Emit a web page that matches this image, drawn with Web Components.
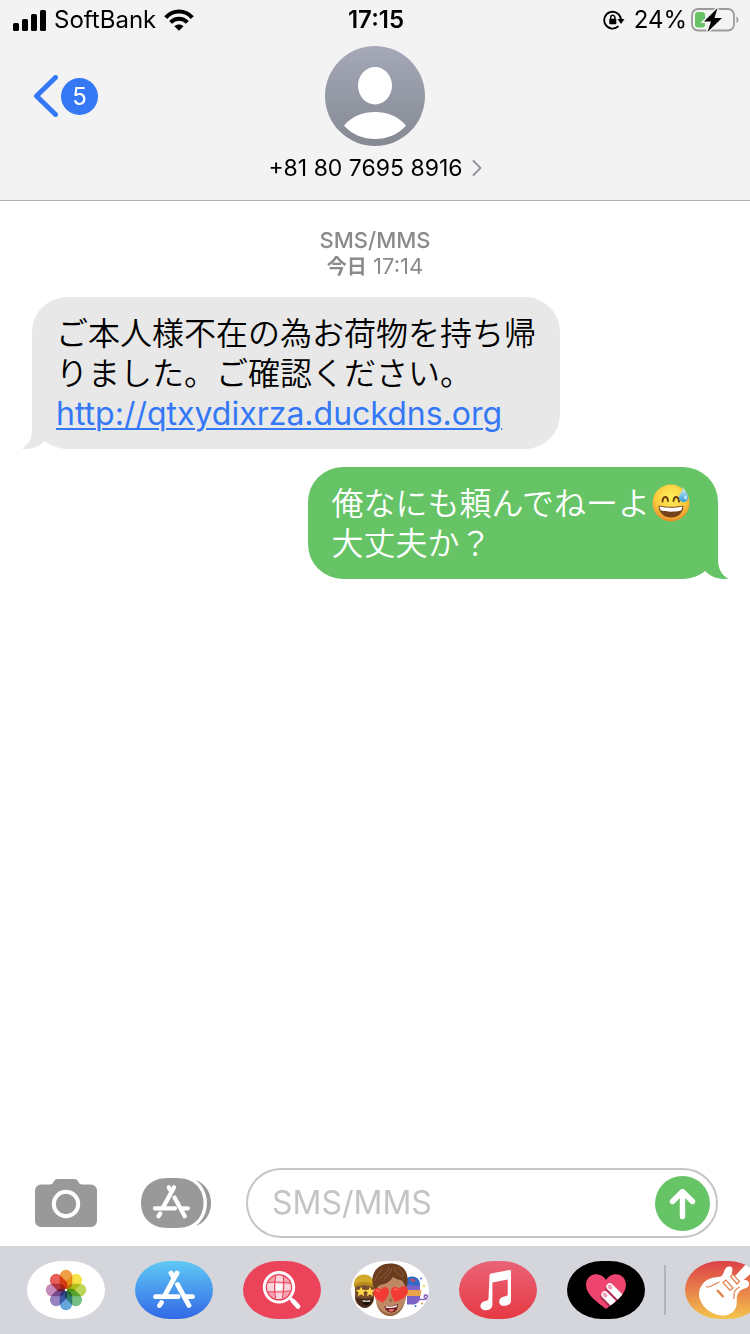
<!DOCTYPE html>
<html lang="ja">
<head>
<meta charset="utf-8">
<meta name="viewport" content="width=device-width, initial-scale=1">
<title>+81 80 7695 8916</title>
<style>
  body {
    margin: 0;
    background: #fff;
    color: #000;
    font-family: Inter, "Noto Sans CJK JP", sans-serif;
  }
</style>
</head>
<body>
<chat-screen>
  <status-bar slot="top" carrier="SoftBank" time="17:15" battery="24%"></status-bar>
  <chat-header slot="top" unread="5">+81 80 7695 8916</chat-header>

  <thread-date service="SMS/MMS" day="今日">17:14</thread-date>
  <message-bubble from="them">ご本人様不在の為お荷物を持ち帰りました。ご確認ください。<br><a href="http://qtxydixrza.duckdns.org">http://qtxydixrza.duckdns.org</a></message-bubble>
  <message-bubble from="me">俺なにも頼んでねーよ<sweat-smile></sweat-smile><br>大丈夫か？</message-bubble>

  <compose-bar slot="bottom" placeholder="SMS/MMS"></compose-bar>
  <app-drawer slot="bottom">
    <app-pill name="photos" label="写真"></app-pill>
    <app-pill name="store" label="App Store"></app-pill>
    <app-pill name="images" label="#画像"></app-pill>
    <app-pill name="memoji" label="ミー文字"></app-pill>
    <app-pill name="music" label="ミュージック"></app-pill>
    <app-pill name="touch" label="Digital Touch"></app-pill>
    <app-pill slot="more" name="guitar" label="GarageBand"></app-pill>
  </app-drawer>
</chat-screen>

<script>
const storeMark = /*html*/`
  <g fill="none" stroke="#fff" stroke-width="4.800" stroke-linecap="round">
    <path d="M36 12l3 5M42 12L30 34M42.500 23.500L54 44.500M20.500 35.700H43M51 35.700h6.500M26.500 41.500l-2 3"/>
  </g>`

class ChatScreen extends HTMLElement {
    constructor() {
        super();
        this.attachShadow({ mode: "open" }).innerHTML = /*html*/`
<style>
  :host {
    display: flex;
    flex-direction: column;
    min-height: 100vh;
    overflow: hidden;
  }
  main {
    flex: 1;
    display: flex;
    flex-direction: column;
    gap: 18px;
    padding: 26px 32px 18px;
  }
</style>
<slot name="top"></slot>
<main><slot></slot></main>
<slot name="bottom"></slot>`
    }
}

class StatusBar extends HTMLElement {
    connectedCallback() {
        if(this.shadowRoot) return
        this.attachShadow({ mode: "open" }).innerHTML = /*html*/`
<style>
  :host {
    display: grid;
    grid-template-columns: 1fr auto 1fr;
    align-items: center;
    height: 40px;
    padding: 0 11px 0 13px;
    background: #f3f3f3;
    font-size: 24px;
    line-height: 28px;
  }
  div { display: flex; align-items: center; gap: 8px; }
  .right { justify-content: flex-end; gap: 4px; }
  .lock { margin-right: 5px; }
  time { font-weight: 600; }
  svg { display: block; }
</style>
<div>
  <svg width="33" height="21" viewBox="0 0 33 21">
    <rect y="13" width="6" height="8" rx="1.500"/><rect x="9" y="9" width="6" height="12" rx="1.500"/>
    <rect x="18" y="4" width="6" height="17" rx="1.500"/><rect x="27" width="6" height="21" rx="1.500"/>
  </svg>
  <span>${this.getAttribute("carrier")}</span>
  <svg width="30" height="22" viewBox="0 0 30 22">
    <g fill="none" stroke="#000" stroke-width="4">
      <path d="M1.700 8.600C9 .4 21 .4 28.300 8.600"/>
      <path d="M6.600 13.400c4.700-5 12.100-5 16.800 0"/>
    </g>
    <path d="M15 21.800l-4.600-4.600c2.600-2.400 6.600-2.400 9.200 0z"/>
  </svg>
</div>
<time>${this.getAttribute("time")}</time>
<div class="right">
  <svg class="lock" width="22" height="20" viewBox="0 0 22 20">
    <path d="M15.500 16.200A8.400 8.400 0 1 1 18 9.500" fill="none" stroke="#000" stroke-width="1.800"/>
    <path d="M14.500 9h7l-3.500 5z"/>
    <rect x="6.300" y="8.800" width="7" height="5.400" rx=".8"/>
    <path d="M7.700 9V7.400a2.100 2.100 0 0 1 4.200 0V9" fill="none" stroke="#000" stroke-width="1.400"/>
  </svg>
  <span>${this.getAttribute("battery")}</span>
  <svg width="48" height="26" viewBox="0 0 48 26">
    <rect x="1" y="2" width="42" height="21.500" rx="6" fill="none" stroke="#9b9b9b" stroke-width="1.800"/>
    <path d="M45.500 9.500c2.600 1 2.600 5.600 0 6.600z" fill="#9b9b9b"/>
    <rect x="4" y="5" width="10" height="15.500" rx="3" fill="#66c466"/>
    <path d="M26.500 1L13 14.500h7L16.500 25 31 11h-7.500z" stroke="#f3f3f3" stroke-width="3"/>
    <path d="M26.500 1L13 14.500h7L16.500 25 31 11h-7.500z"/>
  </svg>
</div>`
    }
}

class ChatHeader extends HTMLElement {
    connectedCallback() {
        if(this.shadowRoot) return
        this.attachShadow({ mode: "open" }).innerHTML = /*html*/`
<style>
  :host {
    display: grid;
    grid-template-columns: 1fr auto 1fr;
    align-items: start;
    height: 160px;
    padding: 0 33px;
    background: #f3f3f3;
    border-bottom: 1px solid #b2b2b2;
  }
  button {
    padding: 0;
    border: 0;
    background: none;
    color: inherit;
    font: inherit;
  }
  .back { display: flex; align-items: center; gap: 3px; height: 112px; justify-self: start; }
  .badge {
    width: 37px;
    border-radius: 50%;
    background: #3478f6;
    color: #fff;
    font-size: 24px;
    line-height: 37px;
    text-align: center;
  }
  .contact {
    display: flex;
    flex-direction: column;
    align-items: center;
    gap: 8px;
    padding-top: 6px;
  }
  .name { display: flex; align-items: center; gap: 9px; font-size: 23px; line-height: 28px; }
  svg { display: block; }
</style>
<button class="back" aria-label="戻る">
  <svg width="25" height="42" viewBox="0 0 25 42"><path d="M22.500 2.500L3.500 21l19 18.500" fill="none" stroke="#3478f6" stroke-width="5" stroke-linecap="round" stroke-linejoin="round"/></svg>
  <span class="badge">${this.getAttribute("unread")}</span>
</button>
<button class="contact">
  <svg width="100" height="100" viewBox="0 0 100 100">
    <defs><linearGradient id="sky" x2="0" y2="1"><stop stop-color="#a5a9b8"/><stop offset="1" stop-color="#858992"/></linearGradient></defs>
    <circle cx="50" cy="50" r="50" fill="url(#sky)"/>
    <ellipse cx="50" cy="39.700" rx="17" ry="18.700" fill="#fff"/>
    <path d="M19 79.500C27 70 38 66 50 66s23 4 31 13.500C73 88.500 62 93 50 93s-23-4.500-31-13.500z" fill="#fff"/>
  </svg>
  <span class="name"><slot></slot>
    <svg width="10" height="16" viewBox="0 0 10 16"><path d="M1.500 1L8.500 8l-7 7" fill="none" stroke="#8e939c" stroke-width="1.800" stroke-linecap="round" stroke-linejoin="round"/></svg>
  </span>
</button>`
    }
}

class ThreadDate extends HTMLElement {
    connectedCallback() {
        if(this.shadowRoot) return
        this.attachShadow({ mode: "open" }).innerHTML = /*html*/`
<style>
  :host {
    display: block;
    color: #8a8a8d;
    font-size: 22px;
    line-height: 26px;
    text-align: center;
  }
  div { height: 26px; }
  .service { font-weight: 500; }
  b { font-size: 20px; font-weight: 700; }
</style>
<div class="service">${this.getAttribute("service")}</div>
<div><b>${this.getAttribute("day")}</b> <slot></slot></div>`
    }
}

class MessageBubble extends HTMLElement {
    constructor() {
        super();
        this.attachShadow({ mode: "open" }).innerHTML = /*html*/`
<style>
  :host {
    box-sizing: border-box;
    position: relative;
    max-width: 528px;
    padding: 17px 24px 15px;
    border-radius: 35px;
    font-family: Inter, "Noto Sans CJK JP", sans-serif;
    font-size: 32px;
    font-weight: 350;
    line-height: 40px;
  }
  :host([from="them"]) { align-self: flex-start; background: #e8e8e8; color: #000; --tail: #e8e8e8; }
  :host([from="me"]) { align-self: flex-end; background: #66c466; color: #fff; --tail: #66c466; }
  ::slotted(a) {
    color: #3478f6;
    font-weight: 400;
    text-decoration-thickness: 2px;
    text-underline-offset: 3px;
  }
  svg {
    position: absolute;
    bottom: 0;
    left: -11px;
    fill: var(--tail);
  }
  :host([from="me"]) svg { left: auto; right: -11px; transform: scaleX(-1); }
</style>
<slot></slot>
<svg width="24" height="34" viewBox="0 0 24 34"><path d="M11 0v14c0 10-4 17-10.500 19.500C10 35 18 32 24 26V0z"/></svg>`
    }
}

class SweatSmile extends HTMLElement {
    constructor() {
        super();
        this.attachShadow({ mode: "open" }).innerHTML = /*html*/`
<style>
  :host { display: inline-block; height: 38px; margin: 0 2px; vertical-align: top; }
  svg { display: block; }
</style>
<svg width="40" height="38" viewBox="0 0 40 38" role="img" aria-label="😅">
  <defs>
    <radialGradient id="face" cx=".5" cy=".35" r=".65"><stop stop-color="#fff05c"/><stop offset=".65" stop-color="#fccb3c"/><stop offset="1" stop-color="#e98a28"/></radialGradient>
    <linearGradient id="drop" x2="0" y2="1"><stop stop-color="#d8f3fc"/><stop offset="1" stop-color="#2f9bdc"/></linearGradient>
  </defs>
  <circle cx="19" cy="19" r="18.500" fill="url(#face)"/>
  <path d="M10.500 17.500c.5-6 5-6 5.500-.5M21.500 17c.5-5.500 5-5.500 5.500.5" fill="none" stroke="#6b3a0c" stroke-width="1.900" stroke-linecap="round"/>
  <path d="M6.500 21.500c8 1.800 17 1.800 25 0C31.500 29 26 33.500 19 33.500S6.500 29 6.500 21.500z" fill="#75421a"/>
  <path d="M7.500 22.500c7.500 1.600 15.500 1.600 23 0-.3 2-.8 3.300-1.500 4-6 1.600-14 1.600-20 0-.7-.7-1.300-2-1.500-4z" fill="#fff"/>
  <path d="M31.500 3.500c1.500 4 4.800 6.500 4.800 10 0 2.700-2 4.500-4.600 4.500s-4.700-1.900-4.700-4.600c0-3.400 3.500-5.900 4.500-9.900z" fill="url(#drop)"/>
  <ellipse cx="33.500" cy="13.500" rx="1.200" ry="2" fill="#fff" opacity=".7"/>
</svg>`
    }
}

class ComposeBar extends HTMLElement {
    connectedCallback() {
        if(this.shadowRoot) return
        const hint = this.getAttribute("placeholder")
        this.attachShadow({ mode: "open" }).innerHTML = /*html*/`
<style>
  :host { display: block; padding: 0 32px 8px 35px; }
  form { display: flex; align-items: center; gap: 35px; }
  .tools { display: flex; align-items: center; gap: 44px; }
  button { padding: 0; border: 0; background: none; }
  svg { display: block; }
  .field {
    box-sizing: border-box;
    flex: 1;
    display: flex;
    align-items: center;
    height: 70px;
    min-width: 0;
    padding: 0 6px 0 24px;
    border: 2px solid #c5c5c7;
    border-radius: 35px;
  }
  input {
    flex: 1;
    min-width: 0;
    padding: 0;
    border: 0;
    outline: 0;
    background: none;
    font: 32px/40px Inter, "Noto Sans CJK JP", sans-serif;
  }
  input::placeholder { color: #c4c4c6; opacity: 1; }
</style>
<form onsubmit="return false">
  <div class="tools">
    <button type="button" aria-label="カメラ">
      <svg width="62" height="48" viewBox="0 0 62 48">
        <path d="M6 5.500h9c2 0 2.500-.8 3.500-2.500 1-2 2-3 4.500-3h16c2.500 0 3.500 1 4.500 3 1 1.700 1.500 2.500 3.500 2.500h9a6 6 0 0 1 6 6V42a6 6 0 0 1-6 6H6a6 6 0 0 1-6-6V11.500a6 6 0 0 1 6-6z" fill="#999"/>
        <circle cx="31" cy="25" r="12.200" fill="none" stroke="#fff" stroke-width="4"/>
      </svg>
    </button>
    <button type="button" aria-label="アプリ">
      <svg width="70" height="50" viewBox="0 0 70 50">
        <path d="M27 0h9c17 0 26.500 11 26.500 25S53 50 36 50h-9C9 50 0 39 0 25S9 0 27 0z" fill="#999"/>
        <path d="M55 2c10 4 15 13 15 23s-5 19-15 23c7-6 11-14 11-23S62 8 55 2z" fill="#999"/>
        <g transform="translate(-4.300 -1.400) scale(.89)">${storeMark}</g>
      </svg>
    </button>
  </div>
  <div class="field">
    <input type="text" aria-label="${hint}" placeholder="${hint}">
    <button aria-label="送信">
      <svg width="55" height="55" viewBox="0 0 55 55">
        <circle cx="27.500" cy="27.500" r="27.500" fill="#66c466"/>
        <path d="M27.500 40.500V16M17.500 25.500l10-10 10 10" fill="none" stroke="#fff" stroke-width="5.400" stroke-linecap="round" stroke-linejoin="round"/>
      </svg>
    </button>
  </div>
</form>`
    }
}

class AppDrawer extends HTMLElement {
    constructor() {
        super();
        this.attachShadow({ mode: "open" }).innerHTML = /*html*/`
<style>
  :host {
    display: flex;
    align-items: center;
    height: 88px;
    padding-left: 27px;
    background: #d5d6dc;
    overflow: hidden;
  }
  .apps { display: flex; gap: 30px; }
  .rule { flex: none; width: 2px; height: 50px; margin: 0 19px; background: #b4b5ba; }
</style>
<div class="apps"><slot></slot></div>
<div class="rule"></div>
<div class="apps"><slot name="more"></slot></div>`
    }
}

const petals = ["#f0922b", "#f2df2e", "#b3d23f", "#62b873", "#4f9ad8", "#8673b8", "#c07bb0", "#e2483f"]

const art = {
    photos: /*html*/`<g style="isolation:isolate">
        ${petals.map((c, i) => `<rect x="32.700" y="8.800" width="12.600" height="19.700" rx="6.300" fill="${c}" opacity=".88" style="mix-blend-mode:multiply" transform="rotate(${i * 45} 39 29)"/>`).join("")}
      </g><circle cx="39" cy="29" r="1.200" fill="#fff"/>`,
    store: storeMark,
    images: /*html*/`
      <clipPath id="lens"><circle cx="36" cy="26.300" r="11.800"/></clipPath>
      <g clip-path="url(#lens)">
        <rect x="24" y="14" width="24" height="25" fill="#f6a6b3"/>
        <path d="M32 14h8v8h-8zM24 22h8v8h-8zM40 22h8v8h-8zM32 30h8v9h-8z" fill="#fbd5db"/>
        <path d="M32.500 22.500h7v7h-7z" fill="#fff"/>
        <path d="M33 14q-3 12 0 25M40 14q2 12-1 25M24 21.500q12-1.500 24 1M24 30.500q12 1.500 24-1" fill="none" stroke="#eb445a" stroke-width="1.100"/>
      </g>
      <circle cx="36" cy="26.300" r="14.700" fill="none" stroke="#fff" stroke-width="3"/>
      <path d="M47 37l3 3" stroke="#fff" stroke-width="3"/>
      <path d="M50 40l5 5.500" stroke="#fff" stroke-width="4.800" stroke-linecap="round"/>`,
    memoji: /*html*/`
      <path d="M4 27c0-7 4-9 9-9s10 2 10 9v10c0 6-5 9.500-9 9.500S4 43 4 37z" fill="#79502f"/>
      <path d="M4.500 36c3 2 14 2 18 0-1 7-4 11-8.500 11S6 43 4.500 36z" fill="#46291a"/>
      <path d="M11 39q4 1.500 9 0c0 3.500-2 5-4.500 5s-4.500-2-4.500-5z" fill="#1f100a"/>
      <path d="M11.500 39q4 1.300 8 0l-.5 1.800h-7z" fill="#fff"/>
      <path d="M3 26c-1-8 4-12.500 10-12.500S23 17 23 26q-9-4-20 0z" fill="#d3a92c"/>
      <path d="M3.500 23q9-4 19 0v3q-9-4-19 0z" fill="#b88a1d"/>
      <path d="M10 25.500l1.500 3.300 3.700.3-2.800 2.500.9 3.600-3.300-1.900-3.200 1.900.9-3.600-2.800-2.500 3.700-.3zM19 25.500l1.300 3.300 3.700.3-2.800 2.500.9 3.600-3.100-1.900-3.200 1.900.9-3.600-2.800-2.500 3.700-.3z" fill="#ffd84a"/>
      <path d="M56 22h13v15c0 4-4 6.500-7 6.500h-6z" fill="#7a62c9"/>
      <path d="M56 17c5-3 11-1 12.500 3l.5 5-13-1z" fill="#3569c4"/>
      <path d="M60 18.500l4 1.500" stroke="#e0484f" stroke-width="2"/>
      <path d="M56 29h14.500l-1 6H56z" fill="#eaa24a"/>
      <path d="M66 38.500h7c3.500 0 4.500-4 2-4.500-2-.3-2.500 2.500-.5 3" fill="none" stroke="#8a65c4" stroke-width="1.700"/>
      <circle cx="70" cy="17.500" r="1" fill="#3569e8"/><circle cx="73" cy="25" r="1.200" fill="#f0d84a"/><circle cx="71" cy="42.500" r="1.100" fill="#eaa24a"/><circle cx="64.500" cy="45" r="1" fill="#3569e8"/>
      <path d="M23.500 24c0-8 7-13 16-13s17 5 16.500 14c.5 11-2 18-6.500 24-3 4-6.500 6-10.500 6s-7-2-10-6c-4-6-6-14-5.500-25z" fill="#bd8863"/>
      <path d="M25 40c2.500 7.500 7.500 12.500 14 12.500S51.500 48 54 40c-1.500 9-8 15-15 15s-13-6-14-15z" fill="#9a6845"/>
      <path d="M24.500 29C21.500 26 20.500 19 22 14.500 24 7 31 2.500 39 2.500c7 0 13 2.500 15.500 7.500 2.500 4.500 3 11 .5 17.500-1-3-2-5.500-4-8-3-.5-6.500-1.500-9-3.500-2.500 4.500-7 7-13 8-2 1-3.500 3-4.500 5z" fill="#6a3d20"/>
      <path d="M27 18c5-2 9-6 11-12M33 18c4-3 6-6 8-11M43 6c1 4 4 8 9 10M47 6c3 3 5 6 6 9M24 20c1-5 4-9 8-12" fill="none" stroke="#925b36" stroke-width="1"/>
      <path d="M39.500 36l-1.500 4q1.500 1.500 3.500 0z" fill="#9b6844"/>
      <path d="M32 41.500c-5-2-9.500-5-9.500-10 0-4.500 5-6 7.500-2.500 1-4 7.500-4 8 1 .3 4-3 8.500-6 11.500z" fill="#f23b35"/>
      <path d="M44 41c-3-4-4.500-8-4-11.500 1-4.500 6-5 7.500-1.500C50 23.500 57 24.500 57 30c0 5-7 9-13 11z" fill="#f23b35"/>
      <path d="M25 30q2-2 3.500.5M43 28.500q2-2 3 1" fill="none" stroke="#ff8a7c" stroke-width="1"/>
      <path d="M33.500 45q7 1.500 13.500-2c0 5.500-2.500 8.500-6.500 8.500s-6.500-3-7-6.500z" fill="#6a1d1d"/>
      <path d="M34.500 45.300q6 1.200 11.700-1.300l-.6 2q-5.500 1.700-10.600.8z" fill="#fff"/>
      <path d="M37 49q3.500-2 6.500-.3-1.200 2-3.200 2T37 49z" fill="#e77474"/>`,
    music: /*html*/`
      <path d="M30.500 14.500q0-1.500 1.500-2L50.500 9q1.500-.2 1.500 1.200V39.500q0 4.500-5.500 5.300c-4 .6-6.500-1.300-6.300-4.500.2-3 2.500-4.300 5-4.800 2.500-.4 3.500-.8 3.500-2.300V18.500l-15.300 3v22c0 3.500-2.500 5.300-6 5.700-3.600.3-6.200-1.500-6-4.500.3-3 2.600-4.200 5-4.700s3.100-.9 3.100-2.500z" fill="#fff"/>`,
    touch: /*html*/`
      <clipPath id="heart"><path d="M39 48C30 41 19 33.500 19 24c0-6.500 4.500-10.700 10-10.700 4.500 0 8 2.400 10 5.700 2-3.300 5.500-5.700 10-5.700 5.500 0 10 4.200 10 10.700 0 9.500-11 17-20 24z"/></clipPath>
      <g clip-path="url(#heart)">
        <rect x="18" y="12" width="42" height="38" fill="#ee4570"/>
        <g stroke="#b22a52" stroke-width="8.400" stroke-linecap="round"><path d="M42.500 27.500L57 42M37.500 35.500L50 48"/></g>
        <g stroke="#fff" stroke-width="7" stroke-linecap="round"><path d="M42.800 25.800L58 41M37.800 33.800L52 48"/></g>
        <g fill="#f3a3bb"><ellipse cx="43" cy="26" rx="2.700" ry="2.200" transform="rotate(45 43 26)"/><ellipse cx="38" cy="34" rx="2.700" ry="2.200" transform="rotate(45 38 34)"/></g>
      </g>`,
    guitar: /*html*/`
      <path d="M14 33c0-7 5-14 13-16 6-1.500 10 0 11.500-5C40 7 42 5 45 5.500c3.500.5 2.500 4.500 1.500 7.500l3.500 2L63 1l8 7-13 11.500c3-1.500 7 .5 6 4.500-1 4-7 3-10 7-4 5-1 10-3 15-2 6-8 9-15 8.500C24 53 14 43 14 33z" fill="#fff"/>
      <g fill="none" stroke="#e4814a" stroke-width="1.200">
        <path d="M38 21.500l3-2.500 7 8-3 2.500zM45.500 15.500l2.500-2 6.500 7-2.500 2.500z"/>
        <path d="M21 25.500c4 2.500 7-2.500 13.500-4.500M54.500 26c-3 2-5.500 3-5.500 7 0 2 .5 3-.5 5"/>
        <path d="M32 29l6.500 7" stroke-width="2.400"/>
      </g>`
}

class AppPill extends HTMLElement {
    connectedCallback() {
        if(this.shadowRoot) return
        const fills = {
            photos: "#fff",
            store: "linear-gradient(#5fc9f5, #3268e6)",
            images: "#eb445a",
            memoji: "#fff",
            music: "linear-gradient(#ea6377, #e63a42)",
            touch: "#000",
            guitar: "linear-gradient(#dc4146, #e8804a 50%, #f3c54c)"
        }
        const name = this.getAttribute("name")
        this.attachShadow({ mode: "open" }).innerHTML = /*html*/`
<style>
  :host { display: block; flex: none; }
  button {
    display: block;
    width: 78px;
    height: 58px;
    padding: 0;
    border: 0;
    border-radius: 35px / 29px;
    background: ${fills[name]};
    overflow: hidden;
  }
  svg { display: block; }
</style>
<button aria-label="${this.getAttribute("label")}"><svg width="78" height="58" viewBox="0 0 78 58">${art[name]}</svg></button>`
    }
}

window.customElements.define('chat-screen', ChatScreen);
window.customElements.define('status-bar', StatusBar);
window.customElements.define('chat-header', ChatHeader);
window.customElements.define('thread-date', ThreadDate);
window.customElements.define('message-bubble', MessageBubble);
window.customElements.define('sweat-smile', SweatSmile);
window.customElements.define('compose-bar', ComposeBar);
window.customElements.define('app-drawer', AppDrawer);
window.customElements.define('app-pill', AppPill);
</script>
</body>
</html>
